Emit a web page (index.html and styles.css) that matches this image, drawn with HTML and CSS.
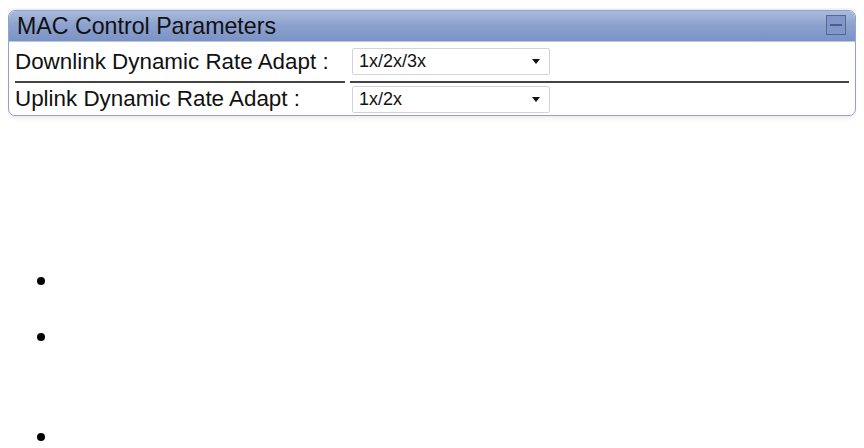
FILE: index.html
```html
<!DOCTYPE html>
<html lang="en">

<head>
    <meta charset="UTF-8">
    <title>MAC Control Parameters</title>
    <link rel="stylesheet" href="styles.css">
</head>

<body>
    <!-- MAC parameters panel -->
    <div class="panel">
        <div class="panel-head">
            <span class="panel-title">MAC Control Parameters</span>
            <span class="toggle"><span class="dash"></span></span>
        </div>
        <table class="params">
            <tr class="row-first">
                <td class="label">Downlink Dynamic Rate Adapt :</td>
                <td class="value">
                    <div class="select">
                        <span>1x/2x/3x</span>
                        <span class="caret"></span>
                    </div>
                </td>
            </tr>
            <tr class="row-last">
                <td class="label">Uplink Dynamic Rate Adapt :</td>
                <td class="value">
                    <div class="select">
                        <span>1x/2x</span>
                        <span class="caret"></span>
                    </div>
                </td>
            </tr>
        </table>
    </div>

    <!-- empty notes list -->
    <ul class="notes">
        <li class="note-a"></li>
        <li class="note-b"></li>
        <li class="note-c"></li>
    </ul>
</body>

</html>
```

FILE: styles.css
```css
body {
    margin: 8px;
    font-family: 'Liberation Sans', Arial, sans-serif;
    color: #111;
    background: #fff;
}

/* Panel */
.panel {
    margin-top: 2px;
    border: 1px solid #8ea2cc;
    border-radius: 7px;
    background: #fff;
    box-shadow: 0 0 7px rgba(0, 0, 0, 0.14);
    overflow: hidden;
}

.panel-head {
    height: 31px;
    display: flex;
    align-items: center;
    justify-content: space-between;
    padding: 0 9px 0 8px;
    background: linear-gradient(#aabcdd, #8da2cf 45%, #7b92c6);
    border-bottom: 1px solid #b8c6e2;
    box-sizing: border-box;
}

.panel-title {
    font-size: 23.2px;
    color: #111;
}

.toggle {
    width: 18px;
    height: 18px;
    border: 1px solid #56698f;
    background: #8197c9;
    display: flex;
    align-items: center;
    justify-content: center;
    margin-top: -2px;
}

.toggle .dash {
    width: 12px;
    height: 2px;
    background: #4d5f85;
}

/* Parameter table */
.params {
    width: calc(100% - 2px);
    margin: 0 1px;
    border-collapse: separate;
    border-spacing: 5px 0;
    font-size: 22.4px;
}

.params td {
    padding: 0;
    vertical-align: middle;
}

.params .label {
    width: 330px;
    white-space: nowrap;
}

.row-first td {
    height: 39px;
    border-bottom: 2px solid #444;
}

.row-last td {
    height: 32px;
}

.value {
    padding-left: 2px !important;
}

.select {
    width: 198px;
    height: 27px;
    box-sizing: border-box;
    border: 1px solid #d4d4d4;
    border-radius: 2px;
    padding: 0 9px 0 6px;
    display: flex;
    align-items: center;
    justify-content: space-between;
    font-size: 18px;
    color: #111;
    background: #fff;
}

.caret {
    width: 0;
    height: 0;
    border-left: 4.5px solid transparent;
    border-right: 4.5px solid transparent;
    border-top: 5px solid #111;
}

/* Notes list */
.notes {
    list-style: none;
    margin: 161px 0 0;
    padding-left: 28.5px;
}

.notes li::before {
    content: "";
    display: block;
    width: 8px;
    height: 8px;
    border-radius: 50%;
    background: #000;
}

.note-a {
    height: 56px;
}

.note-b {
    height: 100px;
}

.note-c {
    height: 8px;
}
```
